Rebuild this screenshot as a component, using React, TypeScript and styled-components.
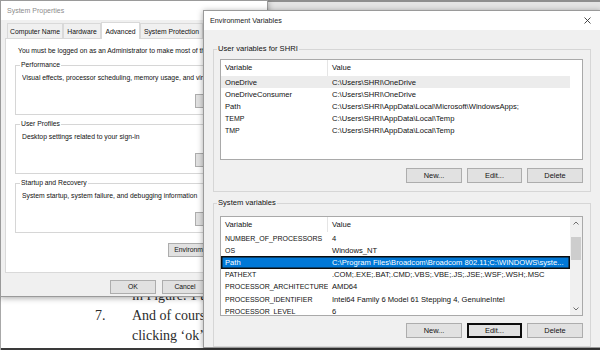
import React from 'react';
import styled, { createGlobalStyle } from 'styled-components';

const GlobalStyle = createGlobalStyle`
  html, body { margin: 0; padding: 0; background: #fff; }
  body { font-family: "Liberation Sans", Arial, sans-serif; }
  * { box-sizing: border-box; }
`;

const Screen = styled.div`
  position: relative;
  width: 600px;
  height: 350px;
  overflow: hidden;
  background: #fff;
`;

/* ---------- background (document behind the dialogs) ---------- */
const Desktop = styled.div`
  display: flex;
  flex-direction: column;
  height: 100%;
  border-left: 1px solid #a8a8a8;
`;
const TopLine = styled.div`
  height: 2px;
  background: #8e8e8e;
`;
const TopStrip = styled.div`
  height: 8px;
  background: #e4e4e4;
  display: flex;
  align-items: center;
  padding-left: 251px;
`;
const DocArea = styled.div`
  flex: 1;
  background: #fff;
  padding-top: 276px;
  font-family: "Liberation Serif", "Times New Roman", serif;
  font-size: 14px;
  line-height: 20px;
  color: #2b2b2b;
`;
const DocLine = styled.div`
  display: grid;
  grid-template-columns: 94px 37px 1fr;
  white-space: nowrap;
`;
const BottomBar = styled.div`
  height: 2px;
  background: #3a3a3a;
`;

/* ---------- generic window bits ---------- */
const Window = styled.div<{ $left: number; $top: number; $w: number; $h: number }>`
  position: absolute;
  left: ${p => p.$left}px;
  top: ${p => p.$top}px;
  width: ${p => p.$w}px;
  height: ${p => p.$h}px;
  background: #f0f0f0;
  border: 1px solid #9a9a9a;
  box-shadow: 0 1px 6px rgba(0, 0, 0, 0.35);
  display: flex;
  flex-direction: column;
  overflow: hidden;
`;
const TitleBar = styled.div<{ $h: number; $inactive?: boolean }>`
  height: ${p => p.$h}px;
  flex: none;
  background: #fff;
  display: flex;
  align-items: center;
  justify-content: space-between;
  padding: 0 9px 0 6px;
  font-size: ${p => (p.$inactive ? 7 : 7.2)}px;
  color: ${p => (p.$inactive ? '#8c8c8c' : '#1a1a1a')};
  white-space: nowrap;
`;
const Btn = styled.div<{ $w: number; $h?: number; $fs?: number; $focus?: boolean }>`
  width: ${p => p.$w}px;
  height: ${p => p.$h ?? 14}px;
  flex: none;
  background: #e1e1e1;
  border: ${p => (p.$focus ? '2px solid #0d0d0d' : '1px solid #adadad')};
  display: flex;
  align-items: center;
  justify-content: center;
  font-size: ${p => p.$fs ?? 6.8}px;
  line-height: 10px;
  color: #111;
  white-space: nowrap;
  overflow: hidden;
`;
const BtnRow = styled.div<{ $mt: number; $gap?: number }>`
  display: flex;
  justify-content: flex-end;
  gap: ${p => p.$gap ?? 5}px;
  margin-top: ${p => p.$mt}px;
`;

/* ---------- System Properties ---------- */
const TabStrip = styled.div`
  height: 18px;
  flex: none;
  display: flex;
  align-items: flex-end;
  padding-left: 6px;
`;
const Tab = styled.div<{ $w: number; $active?: boolean }>`
  width: ${p => p.$w}px;
  height: ${p => (p.$active ? 17 : 15)}px;
  margin-bottom: ${p => (p.$active ? -1 : 0)}px;
  background: ${p => (p.$active ? '#fff' : '#f0f0f0')};
  border: 1px solid #d9d9d9;
  border-bottom: none;
  display: flex;
  align-items: center;
  justify-content: center;
  font-size: 6.8px;
  color: #111;
  white-space: nowrap;
  position: relative;
  z-index: ${p => (p.$active ? 1 : 0)};
`;
const Panel = styled.div`
  flex: 1;
  margin: 0 3px 0 4px;
  background: #fff;
  border: 1px solid #d9d9d9;
  padding: 7px 9px 0 9px;
  font-size: 6.8px;
  color: #111;
  white-space: nowrap;
`;
const Notice = styled.div`
  line-height: 10px;
  padding-left: 3px;
  overflow: hidden;
`;
const Group = styled.fieldset<{ $mt: number }>`
  margin: ${p => p.$mt}px 0 0 0;
  padding: 0 8px 6px 6px;
  border: 1px solid #d6d6d6;
  min-width: 0;
`;
const GroupLabel = styled.legend<{ $ml?: number }>`
  padding: 0 1px;
  margin-left: ${p => p.$ml ?? -2}px;
  line-height: 10px;
`;
const Desc = styled.div`
  margin-top: 3px;
  line-height: 10px;
  overflow: hidden;
`;
const Footer = styled.div`
  height: 23px;
  flex: none;
  display: flex;
  justify-content: flex-end;
  gap: 6px;
  padding: 7px 7px 0 0;
`;

/* ---------- Environment Variables ---------- */
const EnvBody = styled.div`
  flex: 1;
  padding: 14px 9px 0 9px;
  font-size: 7.6px;
  color: #111;
  white-space: nowrap;
`;
const EnvGroup = styled.fieldset<{ $mt: number }>`
  margin: ${p => p.$mt}px 0 0 0;
  padding: 0 7px 8px 6px;
  border: 1px solid #d6d6d6;
  min-width: 0;
`;
const ListBox = styled.div<{ $mt: number; $h: number }>`
  margin-top: ${p => p.$mt}px;
  height: ${p => p.$h}px;
  background: #fff;
  border: 1px solid #a9a9a9;
  display: flex;
  overflow: hidden;
`;
const Table = styled.div`
  flex: 1;
  min-width: 0;
  display: flex;
  flex-direction: column;
`;
const HeaderRow = styled.div<{ $h: number }>`
  height: ${p => p.$h}px;
  flex: none;
  display: grid;
  grid-template-columns: 107px 1fr;
  align-items: stretch;
  line-height: 10px;
`;
const HeaderCell = styled.div<{ $sep?: boolean }>`
  display: flex;
  align-items: center;
  padding-left: 4px;
  border-right: ${p => (p.$sep ? '1px solid #e5e5e5' : 'none')};
`;
const Row = styled.div<{ $state?: 'hover' | 'selected' }>`
  height: 12.2px;
  flex: none;
  display: grid;
  grid-template-columns: 107px 1fr;
  align-items: center;
  background: ${p =>
    p.$state === 'selected' ? '#0078d7' : p.$state === 'hover' ? '#ececec' : 'transparent'};
  color: ${p => (p.$state === 'selected' ? '#fff' : '#111')};
  box-shadow: ${p => (p.$state === 'selected' ? 'inset 0 0 0 1.5px #0c0c0c' : 'none')};
`;
const Cell = styled.div<{ $fs: number }>`
  padding-left: 4px;
  overflow: hidden;
  white-space: nowrap;
  font-size: ${p => p.$fs}px;
  line-height: 11px;
`;
const ScrollGutter = styled.div`
  width: 12px;
  flex: none;
`;
const ScrollBar = styled.div`
  width: 12px;
  flex: none;
  background: #f0f0f0;
  display: flex;
  flex-direction: column;
  align-items: stretch;
`;
const ScrollArrow = styled.div`
  height: 12px;
  flex: none;
  display: flex;
  align-items: center;
  justify-content: center;
`;
const ScrollThumb = styled.div<{ $top: number; $h: number }>`
  margin: ${p => p.$top}px 1px 0 1px;
  height: ${p => p.$h}px;
  background: #cdcdcd;
  flex: none;
`;
const ScrollTrack = styled.div`
  flex: 1;
`;

const Chevron = ({ up, color = '#606060' }: { up?: boolean; color?: string }) => (
  <svg width="6" height="4" viewBox="0 0 6 4">
    <polyline
      points={up ? '0.5,3.5 3,1 5.5,3.5' : '0.5,0.5 3,3 5.5,0.5'}
      fill="none"
      stroke={color}
      strokeWidth="0.9"
    />
  </svg>
);

const CloseIcon = () => (
  <svg width="7" height="7" viewBox="0 0 7 7">
    <path d="M0.5 0.5 L6.5 6.5 M6.5 0.5 L0.5 6.5" stroke="#333" strokeWidth="0.9" />
  </svg>
);

type Var = [string, string];

const userVars: Var[] = [
  ['OneDrive', 'C:\\Users\\SHRI\\OneDrive'],
  ['OneDriveConsumer', 'C:\\Users\\SHRI\\OneDrive'],
  ['Path', 'C:\\Users\\SHRI\\AppData\\Local\\Microsoft\\WindowsApps;'],
  ['TEMP', 'C:\\Users\\SHRI\\AppData\\Local\\Temp'],
  ['TMP', 'C:\\Users\\SHRI\\AppData\\Local\\Temp'],
];

const sysVars: Var[] = [
  ['NUMBER_OF_PROCESSORS', '4'],
  ['OS', 'Windows_NT'],
  ['Path', 'C:\\Program Files\\Broadcom\\Broadcom 802.11;C:\\WINDOWS\\syste...'],
  ['PATHEXT', '.COM;.EXE;.BAT;.CMD;.VBS;.VBE;.JS;.JSE;.WSF;.WSH;.MSC'],
  ['PROCESSOR_ARCHITECTURE', 'AMD64'],
  ['PROCESSOR_IDENTIFIER', 'Intel64 Family 6 Model 61 Stepping 4, GenuineIntel'],
  ['PROCESSOR_LEVEL', '6'],
];

const VarList = ({
  vars,
  height,
  mt,
  headerH,
  hoverIdx,
  selIdx,
  scroll,
}: {
  vars: Var[];
  height: number;
  mt: number;
  headerH: number;
  hoverIdx?: number;
  selIdx?: number;
  scroll?: boolean;
}) => (
  <ListBox $mt={mt} $h={height}>
    <Table>
      <HeaderRow $h={headerH}>
        <HeaderCell $sep>Variable</HeaderCell>
        <HeaderCell>Value</HeaderCell>
      </HeaderRow>
      {vars.map(([k, v], i) => (
        <Row key={k + i} $state={i === selIdx ? 'selected' : i === hoverIdx ? 'hover' : undefined}>
          <Cell $fs={k === k.toUpperCase() ? 7 : 7.6}>{k}</Cell>
          <Cell $fs={7.6}>{v}</Cell>
        </Row>
      ))}
    </Table>
    {scroll ? (
      <ScrollBar>
        <ScrollArrow>
          <Chevron up />
        </ScrollArrow>
        <ScrollThumb $top={8} $h={23} />
        <ScrollTrack />
        <ScrollArrow>
          <Chevron />
        </ScrollArrow>
      </ScrollBar>
    ) : (
      <ScrollGutter />
    )}
  </ListBox>
);

const SysGroup = ({ title, text, mt }: { title: string; text: string; mt: number }) => (
  <Group $mt={mt}>
    <GroupLabel>{title}</GroupLabel>
    <Desc>{text}</Desc>
    <BtnRow $mt={11}>
      <Btn $w={50}>Settings...</Btn>
    </BtnRow>
  </Group>
);

export default function App() {
  return (
    <Screen>
      <GlobalStyle />
      <Desktop>
        <TopLine />
        <TopStrip>
          <Chevron color="#777" />
        </TopStrip>
        <DocArea>
          <DocLine>
            <span />
            <span />
            <span>in Figure. 1 and Figure. 2.</span>
          </DocLine>
          <DocLine>
            <span />
            <span>7.</span>
            <span>And of course, save the changes by</span>
          </DocLine>
          <DocLine>
            <span />
            <span />
            <span>clicking ‘ok’ button.</span>
          </DocLine>
        </DocArea>
        <BottomBar />
      </Desktop>

      <Window $left={0} $top={0} $w={268} $h={297}>
        <TitleBar $h={19} $inactive>
          System Properties
        </TitleBar>
        <TabStrip>
          <Tab $w={56}>Computer Name</Tab>
          <Tab $w={38}>Hardware</Tab>
          <Tab $w={39} $active>
            Advanced
          </Tab>
          <Tab $w={63}>System Protection</Tab>
          <Tab $w={40}>Remote</Tab>
        </TabStrip>
        <Panel>
          <Notice>You must be logged on as an Administrator to make most of these changes.</Notice>
          <SysGroup
            mt={4}
            title="Performance"
            text="Visual effects, processor scheduling, memory usage, and virtual memory"
          />
          <SysGroup mt={4} title="User Profiles" text="Desktop settings related to your sign-in" />
          <SysGroup
            mt={4}
            title="Startup and Recovery"
            text="System startup, system failure, and debugging information"
          />
          <BtnRow $mt={10}>
            <Btn $w={86}>Environment Variables...</Btn>
          </BtnRow>
        </Panel>
        <Footer>
          <Btn $w={46}>OK</Btn>
          <Btn $w={46}>Cancel</Btn>
          <Btn $w={46}>Apply</Btn>
        </Footer>
      </Window>

      <Window $left={203} $top={10} $w={398} $h={338}>
        <TitleBar $h={19}>
          <span>Environment Variables</span>
          <CloseIcon />
        </TitleBar>
        <EnvBody>
          <EnvGroup $mt={0}>
            <GroupLabel $ml={-3}>User variables for SHRI</GroupLabel>
            <VarList vars={userVars} mt={5} height={101} headerH={16} hoverIdx={0} />
            <BtnRow $mt={8}>
              <Btn $w={56} $h={15} $fs={7.4}>New...</Btn>
              <Btn $w={55} $h={15} $fs={7.4}>Edit...</Btn>
              <Btn $w={56} $h={15} $fs={7.4}>Delete</Btn>
            </BtnRow>
          </EnvGroup>
          <EnvGroup $mt={6}>
            <GroupLabel $ml={-3}>System variables</GroupLabel>
            <VarList vars={sysVars} mt={8} height={100} headerH={15} selIdx={2} scroll />
            <BtnRow $mt={7}>
              <Btn $w={56} $h={15} $fs={7.4}>New...</Btn>
              <Btn $w={55} $h={15} $fs={7.4} $focus>
                Edit...
              </Btn>
              <Btn $w={56} $h={15} $fs={7.4}>Delete</Btn>
            </BtnRow>
          </EnvGroup>
        </EnvBody>
      </Window>
    </Screen>
  );
}
